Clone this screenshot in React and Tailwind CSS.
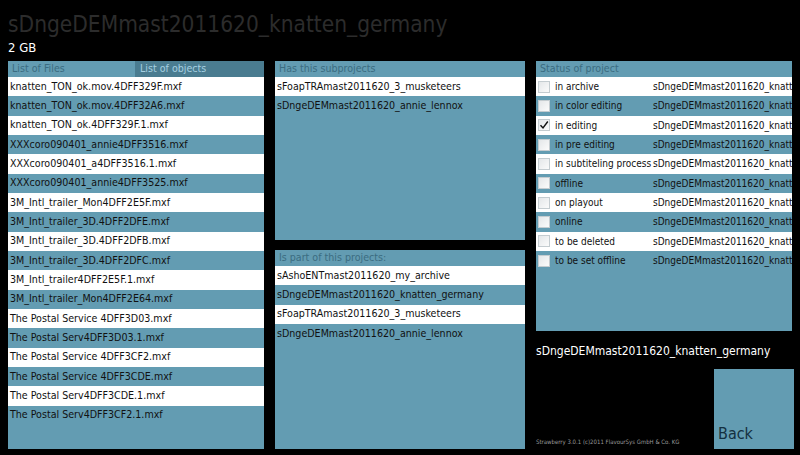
import React from "react";

const files = [
  "knatten_TON_ok.mov.4DFF329F.mxf",
  "knatten_TON_ok.mov.4DFF32A6.mxf",
  "knatten_TON_ok.4DFF329F.1.mxf",
  "XXXcoro090401_annie4DFF3516.mxf",
  "XXXcoro090401_a4DFF3516.1.mxf",
  "XXXcoro090401_annie4DFF3525.mxf",
  "3M_Intl_trailer_Mon4DFF2E5F.mxf",
  "3M_Intl_trailer_3D.4DFF2DFE.mxf",
  "3M_Intl_trailer_3D.4DFF2DFB.mxf",
  "3M_Intl_trailer_3D.4DFF2DFC.mxf",
  "3M_Intl_trailer4DFF2E5F.1.mxf",
  "3M_Intl_trailer_Mon4DFF2E64.mxf",
  "The Postal Service 4DFF3D03.mxf",
  "The Postal Serv4DFF3D03.1.mxf",
  "The Postal Service 4DFF3CF2.mxf",
  "The Postal Service 4DFF3CDE.mxf",
  "The Postal Serv4DFF3CDE.1.mxf",
  "The Postal Serv4DFF3CF2.1.mxf",
];

const subprojects = ["sFoapTRAmast2011620_3_musketeers", "sDngeDEMmast2011620_annie_lennox"];

const parents = [
  "sAshoENTmast2011620_my_archive",
  "sDngeDEMmast2011620_knatten_germany",
  "sFoapTRAmast2011620_3_musketeers",
  "sDngeDEMmast2011620_annie_lennox",
];

const statuses = [
  { label: "in archive" },
  { label: "in color editing" },
  { label: "in editing", checked: true },
  { label: "in pre editing" },
  { label: "in subtiteling process" },
  { label: "offline" },
  { label: "on playout" },
  { label: "online" },
  { label: "to be deleted" },
  { label: "to be set offline" },
];

const font = { fontFamily: '"DejaVu Sans Condensed", "DejaVu Sans", sans-serif' };

function Row({ i, small, children }) {
  return (
    <div
      className={`h-[19.33px] flex items-center px-[2px] text-[#111] whitespace-nowrap overflow-hidden ${
        small ? "text-[10px]" : "text-[10.6px]"
      } ${i % 2 === 0 ? "bg-white" : "bg-[#639cb2]"}`}
    >
      {children}
    </div>
  );
}

function Header({ children }) {
  return <div className="h-4 flex items-center px-[4px] text-[10.6px] text-[#3b6c81]">{children}</div>;
}

function Checkbox({ checked }) {
  return (
    <div className="shrink-0 w-[12px] h-[12px] border border-[#c4ccd0] bg-gradient-to-br from-[#e4e7e9] to-[#fbfbfb] flex items-center justify-center">
      {checked && (
        <svg viewBox="0 0 10 10" className="w-[10px] h-[10px]">
          <path d="M1.5 5.2 L4 8 L8.8 1.5" fill="none" stroke="#111" strokeWidth="1.4" />
        </svg>
      )}
    </div>
  );
}

export default function App() {
  return (
    <div className="w-[800px] h-[455px] bg-black overflow-hidden px-2 flex flex-col" style={font}>
      {/* title */}
      <div className="h-[38px] flex items-end text-[22.5px] leading-none text-[#2c2c2c] pb-[3px]">
        sDngeDEMmast2011620_knatten_germany
      </div>
      <div className="h-[23px] text-[13px] text-white leading-none pt-[3px]">2 GB</div>

      <div className="flex gap-[11px] h-[388px]">
        {/* files */}
        <div className="w-[256px] bg-[#639cb2] flex flex-col">
          <div className="flex h-4">
            <div className="flex-1 flex items-center px-[4px] text-[10.6px] text-[#3b6c81]">List of Files</div>
            <div className="w-[129px] bg-[#4a7c90] flex items-center px-[5px] text-[10.6px] text-[#a6d0e1]">List of objects</div>
          </div>
          {files.map((f, i) => (
            <Row key={f} i={i}>{f}</Row>
          ))}
        </div>

        {/* projects */}
        <div className="w-[250px] flex flex-col gap-[10px]">
          <div className="h-[179px] bg-[#639cb2]">
            <Header>Has this subprojects</Header>
            {subprojects.map((p, i) => (
              <Row key={p} i={i}>{p}</Row>
            ))}
          </div>
          <div className="flex-1 bg-[#639cb2]">
            <Header>Is part of this projects:</Header>
            {parents.map((p, i) => (
              <Row key={p} i={i}>{p}</Row>
            ))}
          </div>
        </div>

        {/* status */}
        <div className="w-[256px] flex flex-col">
          <div className="h-[270px] bg-[#639cb2]">
            <Header>Status of project</Header>
            {statuses.map((s, i) => (
              <Row key={s.label} i={i} small>
                <Checkbox checked={s.checked} />
                <span className="shrink-0 ml-[5px] w-[98px] overflow-hidden">{s.label}</span>
                <span className="shrink-0">sDngeDEMmast2011620_knatte</span>
              </Row>
            ))}
          </div>
          <div className="pt-[14px] text-[12px] text-white leading-none">sDngeDEMmast2011620_knatten_germany</div>
          <div className="flex-1 flex items-end justify-between">
            <div className="text-[6px] text-[#9a9a9a] pb-[3px]">Strawberry 3.0.1 (c)2011 FlavourSys GmbH &amp; Co. KG</div>
            <button className="w-[80px] h-[80px] bg-[#639cb2] mr-[-2px] flex items-end px-[4px] pb-[3px] text-[16px] text-[#143040]">
              Back
            </button>
          </div>
        </div>
      </div>
    </div>
  );
}
